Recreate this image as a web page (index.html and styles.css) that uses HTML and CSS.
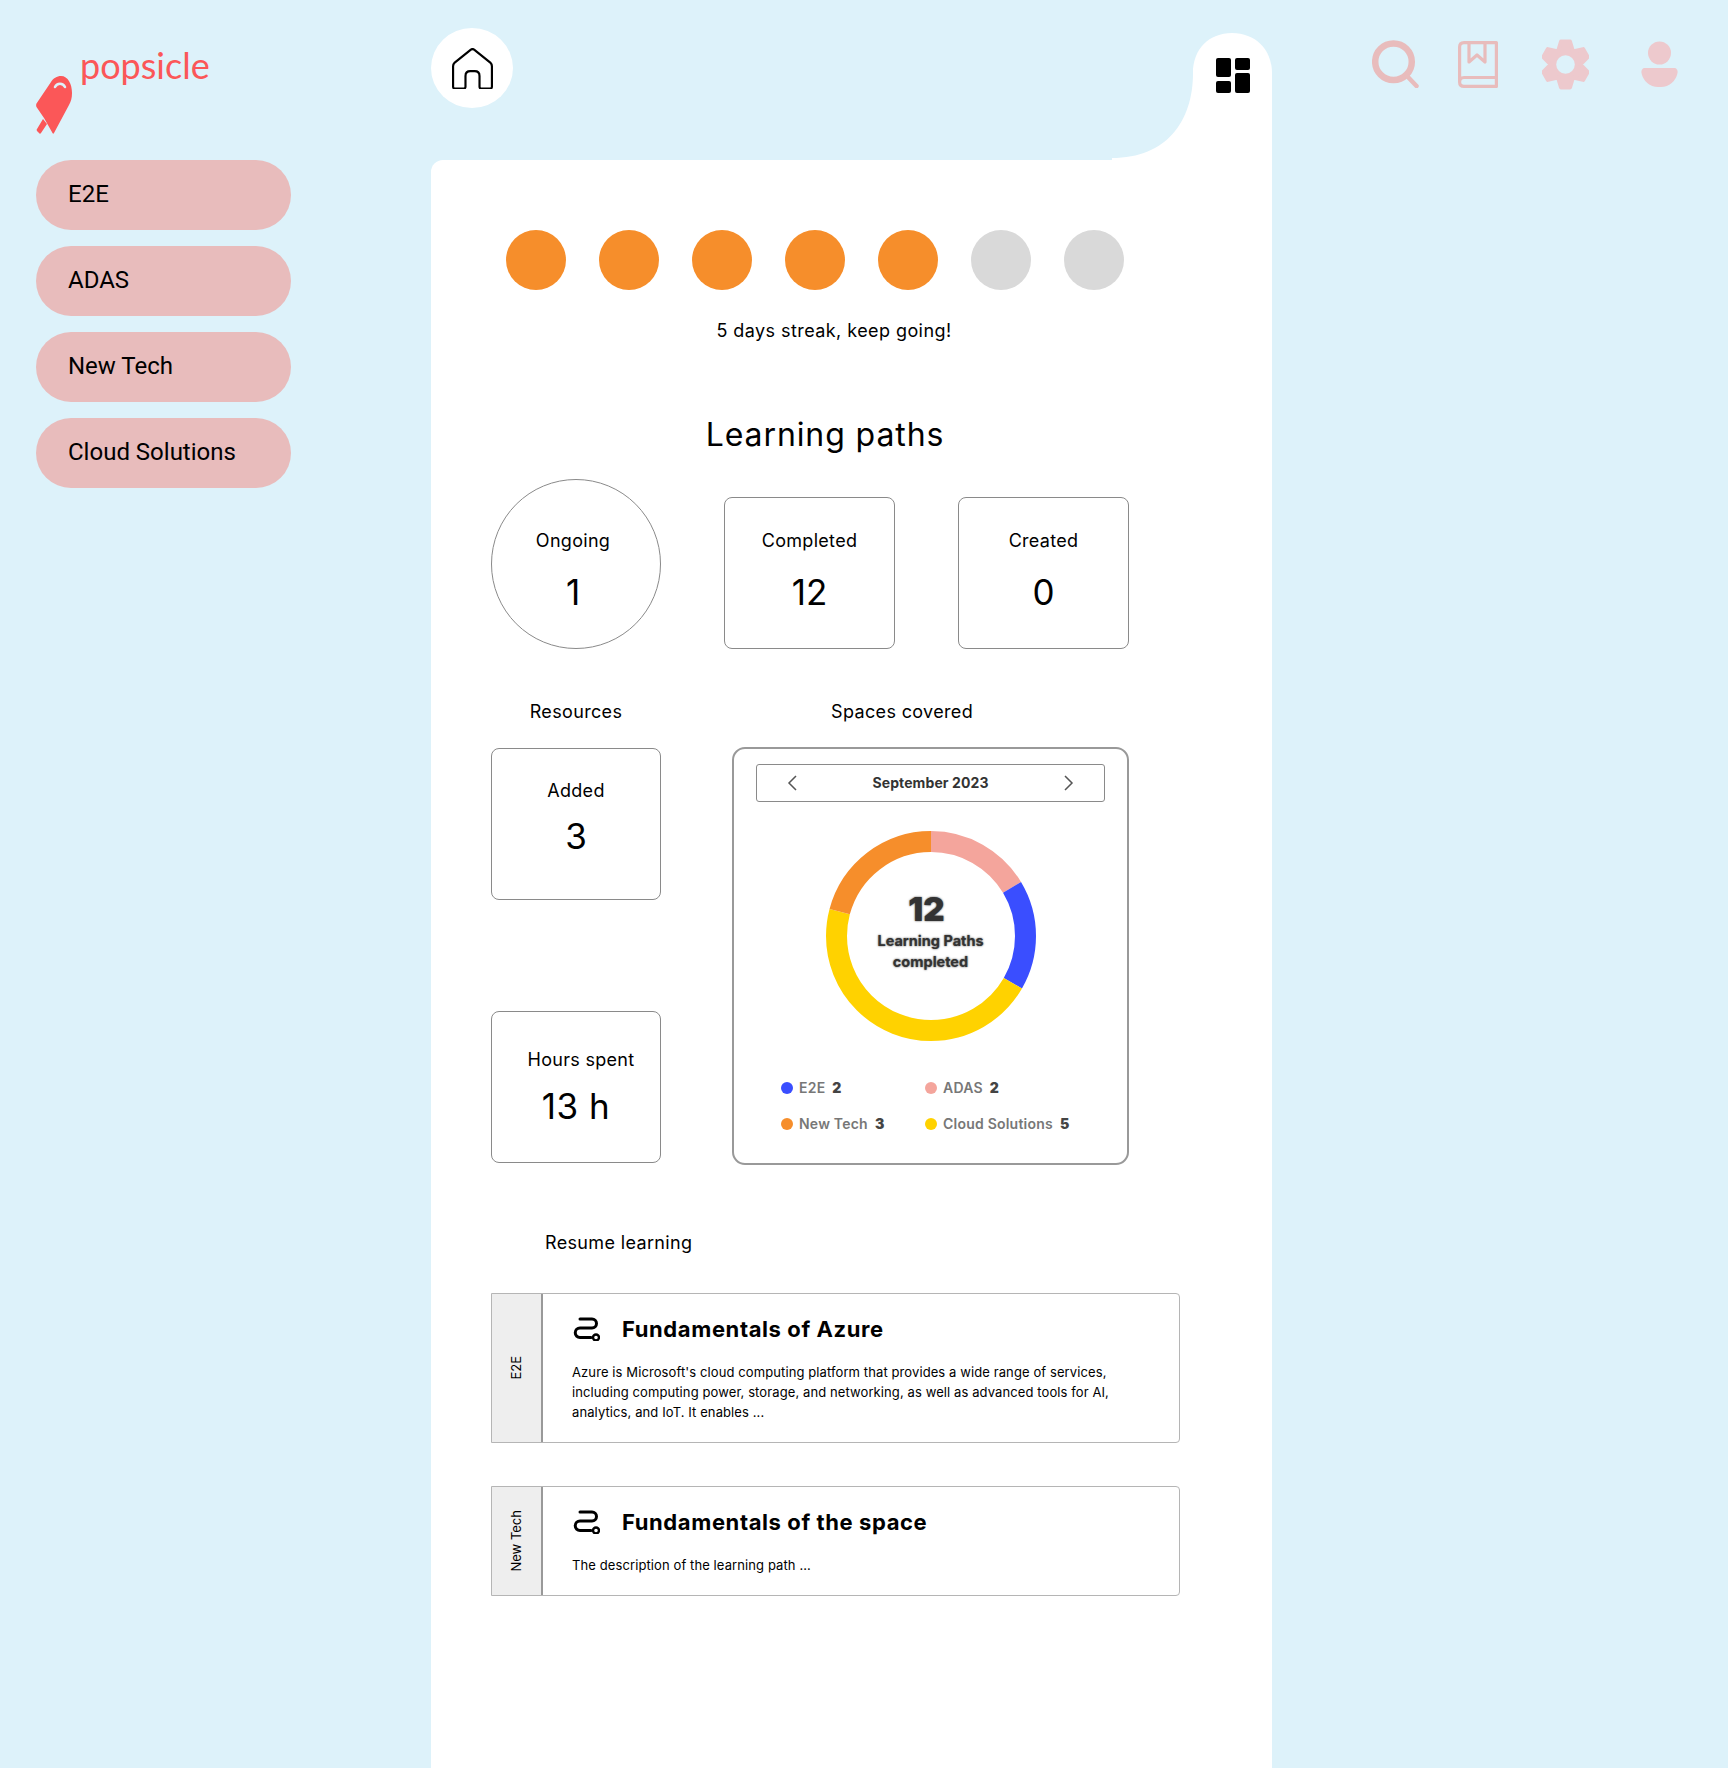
FILE: index.html
```html
<!DOCTYPE html>
<html lang="en">
<head>
<meta charset="utf-8">
<title>popsicle</title>
<link rel="stylesheet" href="styles.css">
</head>
<body>
<div class="app">
  <aside class="sidebar">
    <div class="brand">
      <svg class="brand-icon" viewBox="0 0 36 58" aria-hidden="true">
        <path fill="#FB5758" d="M25 0C32 0 36 8 36 17C36 22 35 25 33 29L18 57C17.500 58 17 58 16.500 57L8 42L0.500 31C0 30 0 28.500 0.500 27.500L15 6C17 2.500 21 0 25 0Z"/>
        <path fill="#FB5758" d="M7 43L11 48L5 57C4.500 58 3.500 58 3 57L1 55C0.500 54 0.500 53.500 1 53Z"/>
        <path fill="none" stroke="#DDF2FA" stroke-width="2.500" stroke-linecap="round" d="M19 11C21 6.500 27 6.500 29 11"/>
      </svg>
      <span class="brand-name">popsicle</span>
    </div>
    <nav class="spaces">
      <a class="space">E2E</a>
      <a class="space">ADAS</a>
      <a class="space">New Tech</a>
      <a class="space">Cloud Solutions</a>
    </nav>
  </aside>

  <main class="content">
    <div class="topbar">
      <button class="home-btn" aria-label="Home">
        <svg viewBox="1 1 38 38" width="41" height="41" fill="none" stroke="#000" stroke-width="2" stroke-linejoin="round">
          <path d="M2 18C2 16.500 2.500 15.500 3.500 14.500L18.500 2.500C19.500 1.800 20.500 1.800 21.500 2.500L36.500 14.500C37.500 15.500 38 16.500 38 18V37C38 38 37.500 38.500 36.500 38.500H28C27 38.500 26.500 38 26.500 37V27C26.500 24 25 22.500 22 22.500H18C15 22.500 13.500 24 13.500 27V37C13.500 38 13 38.500 12 38.500H3.500C2.500 38.500 2 38 2 37Z"/>
        </svg>
      </button>
      <div class="tab">
        <svg class="tab-shape" viewBox="0 0 160 127" width="160" height="127" aria-hidden="true">
          <path fill="#fff" d="M0 127V125C55 125 81 88 81 40C81 16 97 0 120 0C143 0 160 16 160 40V127Z"/>
        </svg>
        <svg class="tab-icon" viewBox="0 0 34 35" width="34" height="35" aria-hidden="true">
          <rect x="0" y="0" width="15" height="19" rx="2"/>
          <rect x="19" y="0" width="15" height="12" rx="2"/>
          <rect x="0" y="23" width="15" height="12" rx="2"/>
          <rect x="19" y="15" width="15" height="20" rx="2"/>
        </svg>
      </div>
    </div>

    <section class="panel">
      <div class="streak">
        <span class="dot on"></span><span class="dot on"></span><span class="dot on"></span><span class="dot on"></span><span class="dot on"></span><span class="dot"></span><span class="dot"></span>
      </div>
      <p class="streak-text">5 days streak, keep going!</p>
      <h1 class="title">Learning paths</h1>

      <div class="stats">
        <div class="stat circle"><span class="stat-label">Ongoing</span><span class="stat-value">1</span></div>
        <div class="stat square"><span class="stat-label">Completed</span><span class="stat-value">12</span></div>
        <div class="stat square"><span class="stat-label">Created</span><span class="stat-value">0</span></div>
      </div>

      <div class="mid">
        <div class="res-col">
          <h2 class="label">Resources</h2>
          <div class="stat box"><span class="stat-label">Added</span><span class="stat-value">3</span></div>
          <div class="stat box hours"><span class="stat-label">Hours spent</span><span class="stat-value">13 h</span></div>
        </div>
        <div class="chart-col">
          <h2 class="label spaces-label">Spaces covered</h2>
          <div class="chart-card">
            <div class="month">
              <svg viewBox="0 0 10 16" width="10" height="16" fill="none" stroke="#555" stroke-width="1.500"><path d="M9 1L2 8L9 15"/></svg>
              <span>September 2023</span>
              <svg viewBox="0 0 10 16" width="10" height="16" fill="none" stroke="#555" stroke-width="1.500"><path d="M1 1L8 8L1 15"/></svg>
            </div>
            <div class="donut">
              <svg viewBox="0 0 210 210" width="210" height="210" aria-hidden="true">
                <g fill="none" stroke-width="21" transform="rotate(-90 105 105)">
                  <circle cx="105" cy="105" r="94.500" pathLength="360" stroke="#F4A59C" stroke-dasharray="59 301" stroke-dashoffset="0"/>
                  <circle cx="105" cy="105" r="94.500" pathLength="360" stroke="#3A4EFF" stroke-dasharray="61 299" stroke-dashoffset="-59"/>
                  <circle cx="105" cy="105" r="94.500" pathLength="360" stroke="#FFD200" stroke-dasharray="165 195" stroke-dashoffset="-120"/>
                  <circle cx="105" cy="105" r="94.500" pathLength="360" stroke="#F68E2B" stroke-dasharray="75 285" stroke-dashoffset="-285"/>
                </g>
              </svg>
              <div class="donut-text">
                <b class="donut-num">12</b>
                <span>Learning Paths<br>completed</span>
              </div>
            </div>
            <ul class="legend">
              <li><i class="key blue"></i>E2E<b>2</b></li>
              <li><i class="key pink"></i>ADAS<b>2</b></li>
              <li><i class="key orange"></i>New Tech<b>3</b></li>
              <li><i class="key yellow"></i>Cloud Solutions<b>5</b></li>
            </ul>
          </div>
        </div>
      </div>

      <h2 class="label resume">Resume learning</h2>

      <article class="course course-long">
        <div class="course-tag"><span>E2E</span></div>
        <div class="course-body">
          <h3 class="course-title">
            <svg viewBox="0 0 28 24" width="28" height="24" fill="none" stroke="#000" stroke-width="3" stroke-linecap="round"><path d="M8 2H20A4.500 4.500 0 0 1 20 11H8A4.500 4.500 0 0 0 8 20.500H19"/><circle cx="24" cy="20.500" r="3" stroke-width="2.400"/></svg>
            Fundamentals of Azure
          </h3>
          <p class="course-desc">Azure is Microsoft's cloud computing platform that provides a wide range of services, including computing power, storage, and networking, as well as advanced tools for AI, analytics, and IoT. It enables ...</p>
        </div>
      </article>
      <article class="course course-short">
        <div class="course-tag"><span>New Tech</span></div>
        <div class="course-body">
          <h3 class="course-title">
            <svg viewBox="0 0 28 24" width="28" height="24" fill="none" stroke="#000" stroke-width="3" stroke-linecap="round"><path d="M8 2H20A4.500 4.500 0 0 1 20 11H8A4.500 4.500 0 0 0 8 20.500H19"/><circle cx="24" cy="20.500" r="3" stroke-width="2.400"/></svg>
            Fundamentals of the space
          </h3>
          <p class="course-desc">The description of the learning path ...</p>
        </div>
      </article>
    </section>
  </main>

  <div class="tools">
    <svg class="tool search" viewBox="0 0 47 48" width="47" height="48" fill="none" stroke="#E8BCBC" aria-label="Search"><circle cx="21.500" cy="21.700" r="18.300" stroke-width="6.500"/><path d="M35 36L44.500 46" stroke-width="4.500" stroke-linecap="round"/></svg>
    <svg class="tool book" viewBox="0 0 40 47" width="40" height="47" fill="none" stroke="#E8BCBC" stroke-width="3.200" stroke-linejoin="round" aria-label="Saved"><path d="M1.600 41V6C1.600 3 3 1.600 6 1.600H38.400V45.400H6C3 45.400 1.600 44 1.600 41C1.600 38 3 36.500 6 36.500H38.400"/><path d="M11 1.600V21L19 14L27 21V1.600"/></svg>
    <svg class="tool gear" viewBox="0 0 47 51" width="47" height="51" aria-label="Settings"><polygon fill="#EDC9CD" stroke="#EDC9CD" stroke-width="4" stroke-linejoin="round" points="19,2.500 28,2.500 31,12.500 41.150,10.100 45.650,17.900 38.500,25.500 45.650,33.100 41.150,40.900 31,38.500 28,48.500 19,48.500 16,38.500 5.850,40.900 1.350,33.100 8.500,25.500 1.350,17.900 5.850,10.100 16,12.500"/><circle cx="23.500" cy="25.500" r="9.300" fill="#DDF2FA"/></svg>
    <svg class="tool user" viewBox="0 0 37 46" width="37" height="46" aria-label="Profile"><circle cx="18.500" cy="12" r="11.500" fill="#EDC9CD"/><path fill="#EDC9CD" d="M4 27H33C35.500 27 37 29 36.500 32C35 40 28 46 20 46H17C9 46 2 40 0.500 32C0 29 1.500 27 4 27Z"/></svg>
  </div>
</div>
</body>
</html>
```
FILE: styles.css
```css
* { box-sizing: border-box; }
html, body { margin: 0; padding: 0; }
body {
  background: #DDF2FA;
  color: #000;
  font-family: Inter, "Liberation Sans", sans-serif;
  height: 1768px;
  overflow: hidden;
}
h1, h2, h3, p, ul { margin: 0; padding: 0; font-weight: normal; }
.app { display: flex; align-items: flex-start; height: 1768px; }

/* Sidebar */
.sidebar { width: 431px; flex: none; padding: 0 0 0 36px; }
.brand { height: 160px; display: flex; align-items: flex-start; position: relative; }
.brand-icon { width: 36px; height: 58px; margin-top: 76px; flex: none; }
.brand-name {
  font-family: Lato, sans-serif;
  font-size: 36px;
  line-height: 42px;
  color: #FB5758;
  margin: 44px 0 0 8px;
}
.spaces { display: flex; flex-direction: column; gap: 16px; }
.space {
  width: 255px;
  height: 70px;
  border-radius: 35px;
  background: #E8BCBC;
  display: flex;
  align-items: center;
  padding: 0 0 2px 32px;
  font-family: Roboto, sans-serif;
  font-size: 24px;
}

/* Main column */
.content { width: 841px; flex: none; }
.topbar { height: 160px; position: relative; display: flex; align-items: flex-start; justify-content: space-between; }
.home-btn {
  width: 82px; height: 80px;
  margin-top: 28px;
  border: 0; border-radius: 50%;
  background: #fff;
  padding: 0;
  display: flex; align-items: center; justify-content: center;
}
.tab { position: absolute; right: 0; top: 33px; width: 160px; height: 127px; }
.tab-shape { display: block; }
.tab-icon { position: absolute; left: 104px; top: 25px; }
.panel {
  background: #fff;
  border-radius: 12px 0 0 0;
  height: 1608px;
  padding: 70px 0 0 60px;
}
.streak { display: flex; gap: 33px; padding-left: 15px; }
.dot { width: 60px; height: 60px; border-radius: 50%; background: #D9D9D9; }
.dot.on { background: #F68E2B; }
.streak-text { font-size: 18px; line-height: 26px; letter-spacing: 0.43px; width: 686px; text-align: center; margin-top: 28px; }
.title { font-size: 32px; line-height: 50px; letter-spacing: 0.9px; width: 668px; text-align: center; margin-top: 66px; }

.stats { display: flex; gap: 63px; align-items: flex-end; margin-top: 19px; }
.stat { display: flex; flex-direction: column; align-items: center; width: 171px; border: 1px solid #8a8a8a; }
.stat.circle { width: 170px; height: 170px; border-radius: 50%; padding: 47px 6px 0 0; }
.stat.square { height: 152px; border-radius: 8px; padding-top: 29px; }
.stat.box { width: 170px; height: 152px; border-radius: 8px; padding-top: 28px; }
.stat.box.hours { padding-top: 34px; }
.stat-label { font-size: 18px; line-height: 27px; letter-spacing: 0.3px; }
.stat-value { font-size: 35px; line-height: 50px; margin-top: 13px; }
.stat.box .stat-value { margin-top: 7px; }
.stat.hours .stat-label { padding-left: 10px; }
.stat.hours .stat-value { margin-top: 8px; letter-spacing: 0.5px; }

.mid { display: flex; margin-top: 49px; gap: 71px; }
.label { font-size: 18px; line-height: 27px; letter-spacing: 0.35px; }
.res-col { width: 170px; display: flex; flex-direction: column; align-items: center; }
.res-col .box { margin-top: 23px; }
.res-col .box.hours { margin-top: 111px; }
.chart-col { width: 397px; }
.spaces-label { padding-left: 99px; }
.chart-card {
  margin-top: 22px;
  width: 397px; height: 418px;
  border: 2px solid #999;
  border-radius: 13px;
  padding: 15px 22px 0;
}
.month {
  height: 38px;
  border: 1px solid #8a8a8a;
  border-radius: 3px;
  display: flex; align-items: center; justify-content: space-between;
  padding: 0 30px 1px;
  font-size: 14px; font-weight: 700; color: #333; letter-spacing: 0.1px;
}
.donut { width: 210px; height: 210px; margin: 29px auto 0; position: relative; }
.donut svg { display: block; }
.donut-text {
  position: absolute; inset: 0;
  display: flex; flex-direction: column; align-items: center;
  padding-top: 57px;
  text-align: center;
  color: #333; font-size: 14.5px; font-weight: 700; line-height: 21px;
  text-shadow: 0 0 2px #444;
}
.donut-num { font-size: 33px; line-height: 42px; margin-right: 8px; }
.legend {
  list-style: none;
  display: grid; grid-template-columns: 144px auto; row-gap: 15px;
  margin: 36px 0 0 25px;
}
.legend li { display: flex; align-items: center; height: 21px; font-size: 14px; font-weight: 600; letter-spacing: 0.22px; color: #777; white-space: nowrap; }
.legend b { color: #444; margin-left: 7px; }
.key { width: 12px; height: 12px; border-radius: 50%; margin-right: 6px; flex: none; }
.key.blue { background: #3A4EFF; }
.key.pink { background: #F4A59C; }
.key.orange { background: #F68E2B; }
.key.yellow { background: #FFD200; }

.resume { margin: 64px 0 0 54px; }
.course {
  display: flex;
  width: 689px;
  margin-top: 37px;
  border: 1px solid #b5b5b5;
  border-radius: 0 4px 4px 0;
}
.course-long { height: 150px; }
.course-short { height: 110px; margin-top: 43px; }
.course-tag {
  width: 51px; flex: none;
  background: #EEE;
  border-right: 2px solid #999;
  display: flex; align-items: center; justify-content: center;
  padding-right: 2px;
}
.course-tag span { writing-mode: vertical-rl; transform: rotate(180deg); font-size: 13px; }
.course-body { padding: 19px 24px 0 29px; flex: 1; }
.course-title { display: flex; align-items: center; gap: 22px; font-size: 22px; line-height: 32px; font-weight: 700; letter-spacing: 0.6px; }
.course-desc { font-size: 13px; line-height: 20px; letter-spacing: 0.1px; margin-top: 17px; }

/* Right tools */
.tools { flex: 1; display: flex; align-items: flex-start; padding: 39px 0 0 100px; }
.tool { flex: none; }
.search { margin-top: 1px; }
.book { margin: 2px 0 0 39px; }
.gear { margin: 0 0 0 44px; }
.user { margin: 2px 0 0 52px; }
```
